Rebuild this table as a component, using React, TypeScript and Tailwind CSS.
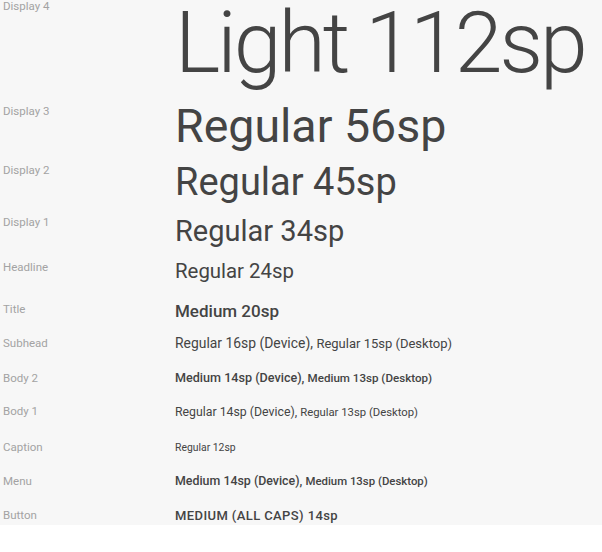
import React from 'react';

type Row = {
  label: string;
  h: string;
  labelMt: string;
  textMt: string;
  content: React.ReactNode;
};

const ROWS: Row[] = [
  {
    label: 'Display 4',
    h: 'h-[100px]',
    labelMt: 'mt-[1px]',
    textMt: 'mt-0',
    content: <div className="text-[86px] font-light leading-none tracking-[-3px]">Light 112sp</div>,
  },
  {
    label: 'Display 3',
    h: 'h-[60px]',
    labelMt: 'mt-[6px]',
    textMt: 'mt-[3px]',
    content: <div className="text-[46.5px] leading-none">Regular 56sp</div>,
  },
  {
    label: 'Display 2',
    h: 'h-[55px]',
    labelMt: 'mt-[5px]',
    textMt: 'mt-[3px]',
    content: <div className="text-[38px] leading-none">Regular 45sp</div>,
  },
  {
    label: 'Display 1',
    h: 'h-[43px]',
    labelMt: 'mt-[2px]',
    textMt: 'mt-[2px]',
    content: <div className="text-[29px] leading-none">Regular 34sp</div>,
  },
  {
    label: 'Headline',
    h: 'h-[42px]',
    labelMt: 'mt-[4px]',
    textMt: 'mt-[3px]',
    content: <div className="text-[20.4px] leading-none">Regular 24sp</div>,
  },
  {
    label: 'Title',
    h: 'h-[35px]',
    labelMt: 'mt-[4px]',
    textMt: 'mt-[3px]',
    content: <div className="text-[17px] font-medium leading-none">Medium 20sp</div>,
  },
  {
    label: 'Subhead',
    h: 'h-[35px]',
    labelMt: 'mt-[3px]',
    textMt: 'mt-[2px]',
    content: (
      <div className="text-[13.9px] leading-none">
        Regular 16sp (Device), <span className="text-[13px]">Regular 15sp (Desktop)</span>
      </div>
    ),
  },
  {
    label: 'Body 2',
    h: 'h-[33px]',
    labelMt: 'mt-[3px]',
    textMt: 'mt-[2px]',
    content: (
      <div className="text-[12.6px] font-medium leading-none">
        Medium 14sp (Device), <span className="text-[11.6px]">Medium 13sp (Desktop)</span>
      </div>
    ),
  },
  {
    label: 'Body 1',
    h: 'h-[37px]',
    labelMt: 'mt-[3px]',
    textMt: 'mt-[3px]',
    content: (
      <div className="text-[12.3px] leading-none">
        Regular 14sp (Device), <span className="text-[11.3px]">Regular 13sp (Desktop)</span>
      </div>
    ),
  },
  {
    label: 'Caption',
    h: 'h-[32px]',
    labelMt: 'mt-[2px]',
    textMt: 'mt-[3px]',
    content: <div className="text-[10.4px] leading-none">Regular 12sp</div>,
  },
  {
    label: 'Menu',
    h: 'h-[35px]',
    labelMt: 'mt-[4px]',
    textMt: 'mt-[3px]',
    content: (
      <div className="text-[12.4px] font-medium leading-none">
        Medium 14sp (Device), <span className="text-[11.4px]">Medium 13sp (Desktop)</span>
      </div>
    ),
  },
  {
    label: 'Button',
    h: 'h-[18px]',
    labelMt: 'mt-[3px]',
    textMt: 'mt-[2px]',
    content: <div className="text-[13px] font-medium leading-none tracking-[0.4px]">MEDIUM (ALL CAPS) 14sp</div>,
  },
];

export default function App() {
  return (
    <div className="w-[602px] h-[552px] bg-white font-['Roboto','Liberation_Sans',sans-serif]">
      <div className="h-[525px] bg-[#f7f7f7] overflow-hidden flex flex-col">
        {ROWS.map(row => (
          <div key={row.label} className={`flex items-start shrink-0 ${row.h}`}>
            <div className={`w-[175px] pl-[3px] shrink-0 text-[11.5px] leading-none text-[#a3a3a3] ${row.labelMt}`}>
              {row.label}
            </div>
            <div className={`whitespace-nowrap text-[#444444] ${row.textMt}`}>{row.content}</div>
          </div>
        ))}
      </div>
    </div>
  );
}
